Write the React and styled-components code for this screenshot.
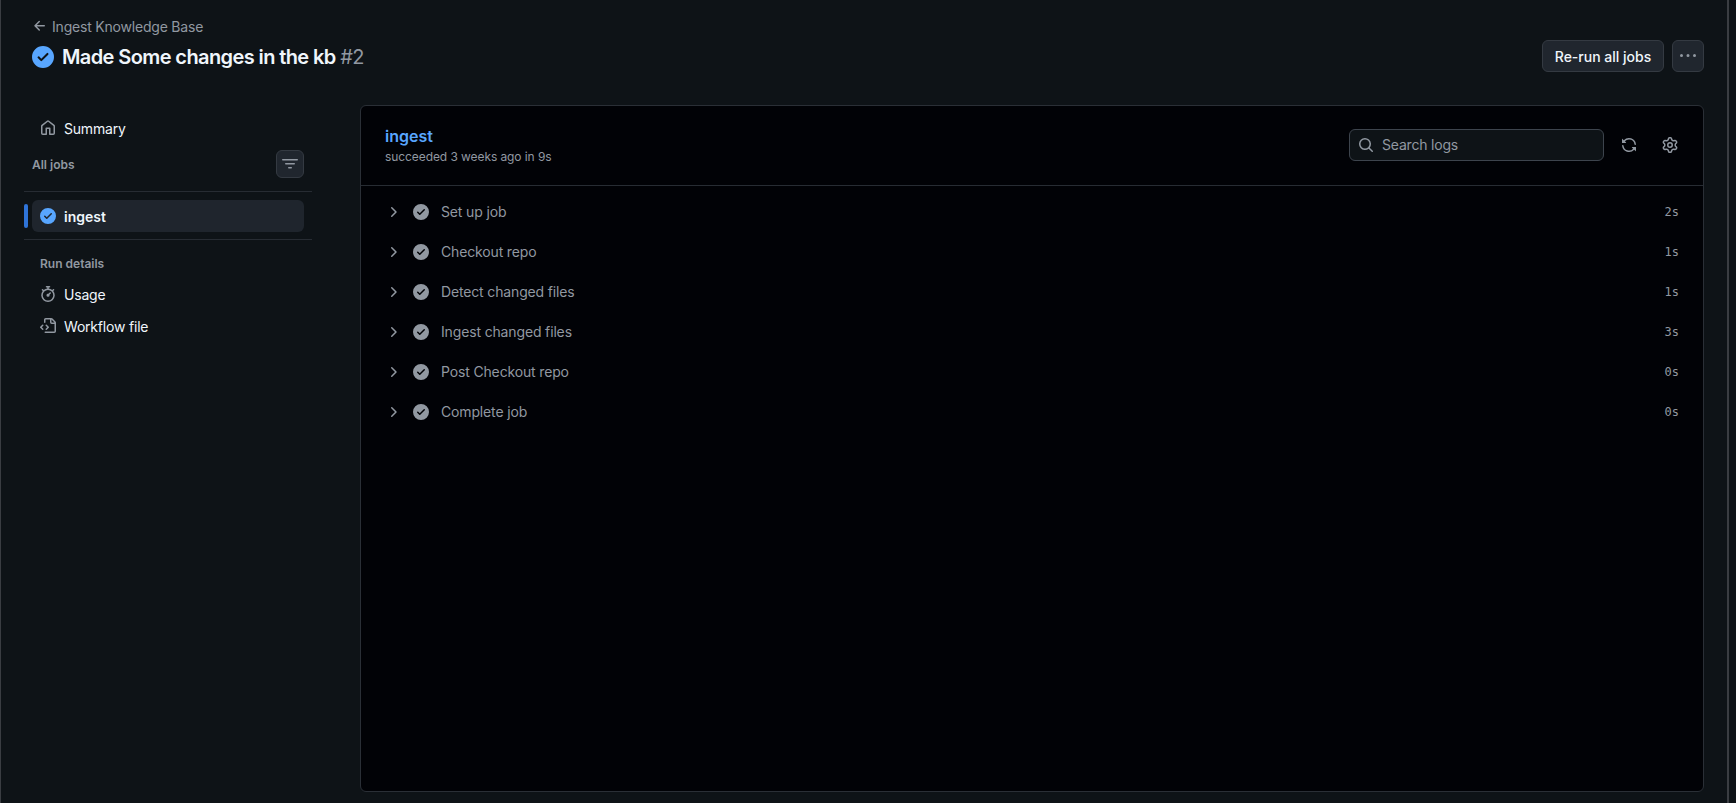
import React from 'react';
import styled, { createGlobalStyle } from 'styled-components';

const paths = {
  arrowLeft: 'M7.78 12.53a.75.75 0 0 1-1.06 0L2.47 8.28a.75.75 0 0 1 0-1.06l4.25-4.25a.751.751 0 0 1 1.042.018.751.751 0 0 1 .018 1.042L4.81 7h7.44a.75.75 0 0 1 0 1.5H4.81l2.97 2.97a.75.75 0 0 1 0 1.06Z',
  home: 'M6.906.664a1.749 1.749 0 0 1 2.187 0l5.25 4.2c.415.332.657.835.657 1.367v7.019A1.75 1.75 0 0 1 13.25 15h-3.5a.75.75 0 0 1-.75-.75V9H7v5.25a.75.75 0 0 1-.75.75h-3.5A1.75 1.75 0 0 1 1 13.25V6.23c0-.531.242-1.034.657-1.366l5.25-4.2Zm1.25 1.171a.25.25 0 0 0-.312 0l-5.25 4.2a.25.25 0 0 0-.094.196v7.019c0 .138.112.25.25.25H5.5V8.25a.75.75 0 0 1 .75-.75h3.5a.75.75 0 0 1 .75.75v5.25h2.75a.25.25 0 0 0 .25-.25V6.23a.25.25 0 0 0-.094-.195Z',
  filter: 'M.75 3h14.5a.75.75 0 0 1 0 1.5H.75a.75.75 0 0 1 0-1.5ZM3 7.75A.75.75 0 0 1 3.75 7h8.5a.75.75 0 0 1 0 1.5h-8.5A.75.75 0 0 1 3 7.75Zm3 4a.75.75 0 0 1 .75-.75h2.5a.75.75 0 0 1 0 1.5h-2.5a.75.75 0 0 1-.75-.75Z',
  stopwatch: 'M5.75.75A.75.75 0 0 1 6.5 0h3a.75.75 0 0 1 0 1.5h-.75v1l-.001.041a6.724 6.724 0 0 1 3.464 1.435l.007-.006.75-.75a.749.749 0 0 1 1.275.326.749.749 0 0 1-.215.734l-.75.75-.006.007a6.75 6.75 0 1 1-10.548 0L2.72 5.03l-.75-.75a.751.751 0 0 1 .018-1.042.751.751 0 0 1 1.042-.018l.75.75.007.006A6.72 6.72 0 0 1 7.25 2.541V1.5H6.5a.75.75 0 0 1-.75-.75ZM8 14.5a5.25 5.25 0 1 0-.001-10.501A5.25 5.25 0 0 0 8 14.5Zm.389-6.7 1.33-1.33a.75.75 0 1 1 1.061 1.06L9.45 8.861A1.503 1.503 0 0 1 8 10.75a1.499 1.499 0 1 1 .389-2.95Z',
  fileCode: 'M4 1.75C4 .784 4.784 0 5.75 0h5.586c.464 0 .909.184 1.237.513l2.914 2.914c.329.328.513.773.513 1.237v8.586A1.75 1.75 0 0 1 14.25 15h-9a.75.75 0 0 1 0-1.5h9a.25.25 0 0 0 .25-.25V6h-2.75A1.75 1.75 0 0 1 10 4.25V1.5H5.75a.25.25 0 0 0-.25.25v2.5a.75.75 0 0 1-1.5 0Zm1.72 4.97a.75.75 0 0 1 1.06 0l2 2a.75.75 0 0 1 0 1.06l-2 2a.749.749 0 0 1-1.275-.326.749.749 0 0 1 .215-.734l1.47-1.47-1.47-1.47a.75.75 0 0 1 0-1.06ZM3.28 7.78 1.81 9.25l1.47 1.47a.751.751 0 0 1-.018 1.042.751.751 0 0 1-1.042.018l-2-2a.75.75 0 0 1 0-1.06l2-2a.751.751 0 0 1 1.042.018.751.751 0 0 1 .018 1.042Zm8.22-6.218V4.25c0 .138.112.25.25.25h2.688l-.011-.013-2.914-2.914-.013-.011Z',
  search: 'M10.68 11.74a6 6 0 0 1-7.922-8.982 6 6 0 0 1 8.982 7.922l3.04 3.04a.749.749 0 0 1-.326 1.275.749.749 0 0 1-.734-.215ZM11.5 7a4.499 4.499 0 1 0-8.997 0A4.499 4.499 0 0 0 11.5 7Z',
  sync: 'M1.705 8.005a.75.75 0 0 1 .834.656 5.5 5.5 0 0 0 9.592 2.97l-1.204-1.204a.25.25 0 0 1 .177-.427h3.646a.25.25 0 0 1 .25.25v3.646a.25.25 0 0 1-.427.177l-1.38-1.38A7.002 7.002 0 0 1 1.05 8.84a.75.75 0 0 1 .656-.834ZM8 2.5a5.487 5.487 0 0 0-4.131 1.869l1.204 1.204A.25.25 0 0 1 4.896 6H1.25A.25.25 0 0 1 1 5.75V2.104a.25.25 0 0 1 .427-.177l1.38 1.38A7.002 7.002 0 0 1 14.95 7.16a.75.75 0 0 1-1.49.178A5.5 5.5 0 0 0 8 2.5Z',
  gear: 'M8 0a8.2 8.2 0 0 1 .701.031C9.444.095 9.99.645 10.16 1.29l.288 1.107c.018.066.079.158.212.224.231.114.454.243.668.386.123.082.233.09.299.071l1.103-.303c.644-.176 1.392.021 1.82.63.27.385.506.792.704 1.218.315.675.111 1.422-.364 1.891l-.814.806c-.049.048-.098.147-.088.294.016.257.016.515 0 .772-.01.147.038.246.088.294l.814.806c.475.469.679 1.216.364 1.891a7.977 7.977 0 0 1-.704 1.217c-.428.61-1.176.807-1.82.63l-1.102-.302c-.067-.019-.177-.011-.3.071a5.909 5.909 0 0 1-.668.386c-.133.066-.194.158-.211.224l-.29 1.106c-.168.646-.715 1.196-1.458 1.26a8.006 8.006 0 0 1-1.402 0c-.743-.064-1.289-.614-1.458-1.26l-.289-1.106c-.018-.066-.079-.158-.212-.224a5.738 5.738 0 0 1-.668-.386c-.123-.082-.233-.09-.299-.071l-1.103.303c-.644.176-1.392-.021-1.82-.63a8.12 8.12 0 0 1-.704-1.218c-.315-.675-.111-1.422.363-1.891l.815-.806c.05-.048.098-.147.088-.294a6.214 6.214 0 0 1 0-.772c.01-.147-.038-.246-.088-.294l-.815-.806C.635 6.045.431 5.298.746 4.623a7.92 7.92 0 0 1 .704-1.217c.428-.61 1.176-.807 1.82-.63l1.102.302c.067.019.177.011.3-.071.214-.143.437-.272.668-.386.133-.066.194-.158.211-.224l.29-1.106C6.009.645 6.556.095 7.299.03 7.53.01 7.764 0 8 0Zm-.571 1.525c-.036.003-.108.036-.137.146l-.289 1.105c-.147.561-.549.967-.998 1.189-.173.086-.34.183-.5.29-.417.278-.97.423-1.529.27l-1.103-.303c-.109-.03-.175.016-.195.045-.22.312-.412.644-.573.99-.014.031-.021.11.059.19l.815.806c.411.406.562.957.53 1.456a4.709 4.709 0 0 0 0 .582c.032.499-.119 1.05-.53 1.456l-.815.806c-.081.08-.073.159-.059.19.162.346.353.677.573.989.02.03.085.076.195.046l1.102-.303c.56-.153 1.113-.008 1.53.27.161.107.328.204.501.29.447.222.85.629.997 1.189l.289 1.105c.029.109.101.143.137.146a6.6 6.6 0 0 0 1.142 0c.036-.003.108-.036.137-.146l.289-1.105c.147-.561.549-.967.998-1.189.173-.086.34-.183.5-.29.417-.278.97-.423 1.529-.27l1.103.303c.109.029.175-.016.195-.045.22-.313.411-.644.573-.99.014-.031.021-.11-.059-.19l-.815-.806c-.411-.406-.562-.957-.53-1.456a4.709 4.709 0 0 0 0-.582c-.032-.499.119-1.05.53-1.456l.815-.806c.081-.08.073-.159.059-.19a6.464 6.464 0 0 0-.573-.989c-.02-.03-.085-.076-.195-.046l-1.102.303c-.56.153-1.113.008-1.53-.27a4.44 4.44 0 0 0-.501-.29c-.447-.222-.85-.629-.997-1.189l-.289-1.105c-.029-.11-.101-.143-.137-.146a6.6 6.6 0 0 0-1.142 0ZM11 8a3 3 0 1 1-6 0 3 3 0 0 1 6 0ZM9.5 8a1.5 1.5 0 1 0-3.001.001A1.5 1.5 0 0 0 9.5 8Z',
  chevron: 'M6.22 3.22a.75.75 0 0 1 1.06 0l4.25 4.25a.75.75 0 0 1 0 1.06l-4.25 4.25a.751.751 0 0 1-1.042-.018.751.751 0 0 1-.018-1.042L9.94 8 6.22 4.28a.75.75 0 0 1 0-1.06Z',
  check: 'M8 16A8 8 0 1 1 8 0a8 8 0 0 1 0 16Zm3.78-9.72a.751.751 0 0 0-.018-1.042.751.751 0 0 0-1.042-.018L6.75 9.19 5.28 7.72a.751.751 0 0 0-1.042.018.751.751 0 0 0-.018 1.042l2 2a.75.75 0 0 0 1.06 0Z',
  kebab: 'M8 9a1.5 1.5 0 1 0 0-3 1.5 1.5 0 0 0 0 3ZM1.5 9a1.5 1.5 0 1 0 0-3 1.5 1.5 0 0 0 0 3Zm13 0a1.5 1.5 0 1 0 0-3 1.5 1.5 0 0 0 0 3Z',
};

const steps = [
  { name: 'Set up job', time: '2s' },
  { name: 'Checkout repo', time: '1s' },
  { name: 'Detect changed files', time: '1s' },
  { name: 'Ingest changed files', time: '3s' },
  { name: 'Post Checkout repo', time: '0s' },
  { name: 'Complete job', time: '0s' },
];

function Icon({ name, size = 16, color = '#9198a1' }) {
  return (
    <IconSvg viewBox="0 0 16 16" width={size} height={size} fill={color}>
      <path d={paths[name]} />
    </IconSvg>
  );
}

function App() {
  return (
    <Shell>
      <GlobalStyle />
      <Header>
        <TitleBlock>
          <BackLink>
            <Icon name="arrowLeft" />
            Ingest Knowledge Base
          </BackLink>
          <Title>
            <Icon name="check" size={22} color="#58a6ff" />
            <TitleText>Made Some changes in the kb <RunNumber>#2</RunNumber></TitleText>
          </Title>
        </TitleBlock>
        <HeaderActions>
          <Button>Re-run all jobs</Button>
          <SquareButton $size={32}><Icon name="kebab" /></SquareButton>
        </HeaderActions>
      </Header>

      <Main>
        <Sidebar>
          <NavItem><Icon name="home" />Summary</NavItem>
          <JobsHeading>
            <SectionLabel>All jobs</SectionLabel>
            <SquareButton $size={28}><Icon name="filter" /></SquareButton>
          </JobsHeading>
          <Divider $top={13} />
          <JobRow>
            <ActiveBar />
            <JobItem><Icon name="check" color="#58a6ff" />ingest</JobItem>
          </JobRow>
          <Divider $top={7} />
          <DetailsLabel>Run details</DetailsLabel>
          <NavItem><Icon name="stopwatch" />Usage</NavItem>
          <NavItem><Icon name="fileCode" />Workflow file</NavItem>
        </Sidebar>

        <Panel>
          <PanelHeader>
            <div>
              <JobName>ingest</JobName>
              <JobMeta>succeeded 3 weeks ago in 9s</JobMeta>
            </div>
            <PanelTools>
              <SearchBox>
                <Icon name="search" />
                <SearchInput placeholder="Search logs" />
              </SearchBox>
              <ToolIcon $gap={17}><Icon name="sync" /></ToolIcon>
              <ToolIcon $gap={25}><Icon name="gear" /></ToolIcon>
            </PanelTools>
          </PanelHeader>
          <StepList>
            {steps.map((step) => (
              <Step key={step.name}>
                <Icon name="chevron" />
                <StepStatus><Icon name="check" /></StepStatus>
                <StepName>{step.name}</StepName>
                <StepTime>{step.time}</StepTime>
              </Step>
            ))}
          </StepList>
        </Panel>
      </Main>
    </Shell>
  );
}

export default App;

const GlobalStyle = createGlobalStyle`
  html, body {
    margin: 0;
    height: 100%;
    background: #0e1317;
  }

  body {
    font-family: Inter, "Noto Sans", sans-serif;
    color: #f0f6fc;
    overflow: hidden;
  }
`;

const IconSvg = styled.svg`
  display: block;
  flex-shrink: 0;
`;

const Shell = styled.div`
  box-sizing: border-box;
  width: 1729px;
  height: 803px;
  padding: 16px 23px 11px;
  display: flex;
  flex-direction: column;
  background: #0e1317;
  border-left: 1px solid #3a3d42;
  border-right: 2px solid #3a3d42;
`;

const Header = styled.header`
  display: flex;
  justify-content: space-between;
  align-items: flex-end;
  height: 56px;
  padding-left: 8px;
  flex-shrink: 0;
`;

const TitleBlock = styled.div`
  display: flex;
  flex-direction: column;
  gap: 6px;
`;

const BackLink = styled.a`
  display: flex;
  align-items: center;
  gap: 4px;
  height: 20px;
  font-size: 14px;
  letter-spacing: -0.2px;
  color: #9198a1;
`;

const Title = styled.h1`
  display: flex;
  align-items: center;
  gap: 8px;
  margin: 0;
  height: 30px;
  font-size: 20px;
  line-height: 30px;
  font-weight: 600;
  letter-spacing: -0.6px;
`;

const TitleText = styled.span`
  white-space: nowrap;
`;

const RunNumber = styled.span`
  font-weight: 400;
  color: #9198a1;
`;

const HeaderActions = styled.div`
  display: flex;
  gap: 8px;
`;

const Button = styled.button`
  box-sizing: border-box;
  width: 122px;
  height: 32px;
  padding: 0;
  font-family: inherit;
  font-size: 14px;
  font-weight: 500;
  color: #f0f6fc;
  background: #20262e;
  border: 1px solid #343a42;
  border-radius: 6px;
`;

const SquareButton = styled.button`
  box-sizing: border-box;
  display: flex;
  align-items: center;
  justify-content: center;
  width: ${(p) => p.$size}px;
  height: ${(p) => p.$size}px;
  padding: 0;
  background: #20262e;
  border: 1px solid #343a42;
  border-radius: 6px;
`;

const Main = styled.div`
  flex: 1;
  min-height: 0;
  display: flex;
  gap: 48px;
  margin-top: 33px;
`;

const Sidebar = styled.aside`
  width: 288px;
  flex-shrink: 0;
  padding-top: 7px;
`;

const NavItem = styled.div`
  box-sizing: border-box;
  display: flex;
  align-items: center;
  gap: 8px;
  height: 32px;
  padding-left: 16px;
  font-size: 14px;
  letter-spacing: -0.2px;
  color: #f0f6fc;
`;

const JobsHeading = styled.div`
  display: flex;
  align-items: center;
  justify-content: space-between;
  height: 28px;
  margin-top: 6px;
  padding: 0 8px;
`;

const SectionLabel = styled.span`
  font-size: 12px;
  font-weight: 600;
  color: #9198a1;
`;

const Divider = styled.hr`
  margin: ${(p) => p.$top}px 0 8px;
  height: 1px;
  border: 0;
  background: #272c33;
`;

const JobRow = styled.div`
  position: relative;
  margin: 0 8px;
`;

const ActiveBar = styled.span`
  position: absolute;
  left: -8px;
  top: 4px;
  width: 4px;
  height: 24px;
  border-radius: 6px;
  background: #2f74d8;
`;

const JobItem = styled.div`
  display: flex;
  align-items: center;
  gap: 8px;
  height: 32px;
  padding-left: 8px;
  border-radius: 6px;
  background: #1f252d;
  font-size: 14px;
  font-weight: 600;
`;

const DetailsLabel = styled(SectionLabel)`
  display: block;
  margin: 14px 0 4px;
  padding-left: 16px;
  line-height: 20px;
`;

const Panel = styled.main`
  flex: 1;
  min-width: 0;
  display: flex;
  flex-direction: column;
  background: #010206;
  border: 1px solid #2a2f36;
  border-radius: 6px;
`;

const PanelHeader = styled.div`
  box-sizing: border-box;
  display: flex;
  align-items: center;
  justify-content: space-between;
  height: 80px;
  padding: 0 25px 2px 24px;
  border-bottom: 1px solid #272c33;
`;

const JobName = styled.div`
  font-size: 16px;
  font-weight: 600;
  line-height: 24px;
  color: #58a6ff;
`;

const JobMeta = styled.div`
  font-size: 12px;
  line-height: 18px;
  letter-spacing: -0.08px;
  color: #9198a1;
`;

const PanelTools = styled.div`
  display: flex;
  align-items: center;
`;

const SearchBox = styled.div`
  box-sizing: border-box;
  display: flex;
  align-items: center;
  gap: 8px;
  width: 255px;
  height: 32px;
  padding: 0 8px;
  background: #0e1317;
  border: 1px solid #3d444d;
  border-radius: 6px;
`;

const SearchInput = styled.input`
  flex: 1;
  min-width: 0;
  padding: 0;
  background: transparent;
  border: 0;
  outline: 0;
  font-family: inherit;
  font-size: 14px;
  letter-spacing: -0.2px;
  color: #f0f6fc;

  &::placeholder {
    color: #9198a1;
    opacity: 1;
  }
`;

const ToolIcon = styled.span`
  display: block;
  margin-left: ${(p) => p.$gap}px;
`;

const StepList = styled.div`
  padding-top: 6px;
`;

const Step = styled.div`
  display: flex;
  align-items: center;
  height: 40px;
  padding: 0 24px;
  font-size: 14px;
  color: #9198a1;
`;

const StepStatus = styled.span`
  display: block;
  margin-left: 12px;
`;

const StepName = styled.span`
  flex: 1;
  margin-left: 12px;
  padding-bottom: 2px;
  letter-spacing: -0.15px;
`;

const StepTime = styled.span`
  font-family: "DejaVu Sans Mono", "Liberation Mono", monospace;
  font-size: 12px;
`;
